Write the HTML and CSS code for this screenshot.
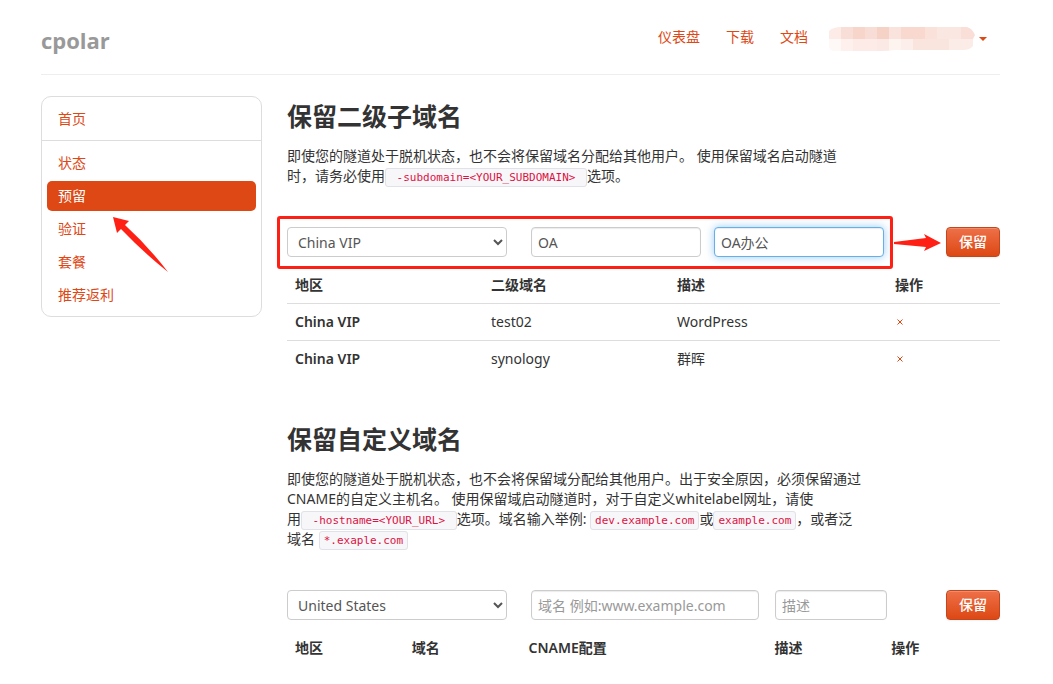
FILE: index.html
```html
<!DOCTYPE html>
<html lang="zh-CN">
<head>
<meta charset="utf-8">
<meta name="viewport" content="width=device-width, initial-scale=1">
<title>cpolar</title>
<link rel="stylesheet" href="styles.css">
</head>
<body>
<header class="site-header">
  <a class="brand" href="#">cpolar</a>
  <nav class="top-nav">
    <a href="#">仪表盘</a>
    <a href="#">下载</a>
    <a href="#">文档</a>
    <button class="account" type="button" aria-label="账户">
      <svg class="account-mask" width="146" height="24" viewBox="0 0 146 24" aria-hidden="true">
        <defs><clipPath id="mask"><path d="M0 4Q4 0 12 0H138Q143 1 146 8L144 12V19Q141 23 134 23H66Q60 24 52 24H6Q1 24 0 20Z"/></clipPath></defs>
        <g clip-path="url(#mask)" shape-rendering="crispEdges">
          <path fill="#fcebe7" d="M0 0h12v12H0z"/><path fill="#f9ded7" d="M12 0h12v12H12z"/><path fill="#f7d5cb" d="M24 0h12v12H24z"/><path fill="#f8ddd6" d="M36 0h12v12H36z"/><path fill="#f6d1c5" d="M48 0h12v12H48z"/><path fill="#fbe3dd" d="M60 0h12v12H60z"/><path fill="#f8d8cf" d="M72 0h24v12H72z"/><path fill="#fae1da" d="M96 0h12v12H96z"/><path fill="#fae7e2" d="M108 0h24v12H108z"/><path fill="#fadfd9" d="M132 0h14v12H132z"/>
          <path fill="#fef8f7" d="M0 12h12v12H0z"/><path fill="#fdf0ed" d="M12 12h12v12H12z"/><path fill="#fcebe7" d="M24 12h24v12H24z"/><path fill="#fbe9e5" d="M48 12h12v12H48z"/><path fill="#fdf4f0" d="M60 12h12v12H60z"/><path fill="#fceeea" d="M72 12h12v12H72z"/><path fill="#fae4de" d="M84 12h36v12H84z"/><path fill="#fcece8" d="M120 12h26v12H120z"/>
        </g>
      </svg>
      <span class="caret"></span>
    </button>
  </nav>
</header>

<div class="layout">
  <aside class="sidebar">
    <ul class="side-group">
      <li><a href="#">首页</a></li>
    </ul>
    <ul class="side-group">
      <li><a href="#">状态</a></li>
      <li><a class="active" href="#">预留</a></li>
      <li><a href="#">验证</a></li>
      <li><a href="#">套餐</a></li>
      <li><a href="#">推荐返利</a></li>
    </ul>
    <svg class="side-arrow" width="58" height="58" viewBox="0 0 58 58" aria-hidden="true"><path fill="#ff2015" d="M1 1L17 5L13 9Q36 30 56 56Q32 37 9 13L5 17Z"/></svg>
  </aside>

  <main class="content">
    <section class="panel">
      <h2>保留二级子域名</h2>
      <p class="intro">即使您的隧道处于脱机状态，也不会将保留域名分配给其他用户。 使用保留域名启动隧道时，请务必使用<code>&nbsp;-subdomain=&lt;YOUR_SUBDOMAIN&gt;&nbsp;</code>选项。</p>
      <form class="form-row">
        <div class="fields fields-sub">
          <select class="region" aria-label="地区"><option>China VIP</option></select>
          <input class="sub-name" type="text" value="OA" aria-label="二级域名">
          <input class="sub-note focused" type="text" value="OA办公" aria-label="描述">
          <svg class="row-arrow" width="48" height="18" viewBox="0 0 48 18" aria-hidden="true"><path fill="#ff2015" d="M0 8L32 4L30 0L47 9L30 17L32 13L0 10Z"/></svg>
        </div>
        <button class="btn" type="button">保留</button>
      </form>
      <table class="list list-sub">
        <thead><tr><th>地区</th><th>二级域名</th><th>描述</th><th>操作</th></tr></thead>
        <tbody>
          <tr><th scope="row">China VIP</th><td>test02</td><td>WordPress</td><td><a class="remove" href="#" aria-label="删除"><svg width="6" height="6" viewBox="0 0 6 6"><path d="M0.5 0.5L5.5 5.5M5.5 0.5L0.5 5.5"/></svg></a></td></tr>
          <tr><th scope="row">China VIP</th><td>synology</td><td>群晖</td><td><a class="remove" href="#" aria-label="删除"><svg width="6" height="6" viewBox="0 0 6 6"><path d="M0.5 0.5L5.5 5.5M5.5 0.5L0.5 5.5"/></svg></a></td></tr>
        </tbody>
      </table>
    </section>

    <section class="panel">
      <h2>保留自定义域名</h2>
      <p class="intro">即使您的隧道处于脱机状态，也不会将保留域分配给其他用户。出于安全原因，必须保留通过CNAME的自定义主机名。 使用保留域启动隧道时，对于自定义whitelabel网址，请使用<code>&nbsp;-hostname=&lt;YOUR_URL&gt;&nbsp;</code>选项。域名输入举例: <code>dev.example.com</code>或<code>example.com</code>，或者泛域名 <code>*.exaple.com</code></p>
      <form class="form-row">
        <div class="fields fields-custom">
          <select class="region" aria-label="地区"><option>United States</option></select>
          <input class="domain" type="text" placeholder="域名 例如:www.example.com" aria-label="域名">
          <input class="domain-note" type="text" placeholder="描述" aria-label="描述">
        </div>
        <button class="btn" type="button">保留</button>
      </form>
      <table class="list list-custom">
        <thead><tr><th>地区</th><th>域名</th><th>CNAME配置</th><th>描述</th><th>操作</th></tr></thead>
      </table>
    </section>
  </main>
</div>
</body>
</html>
```
FILE: styles.css
```css
* { box-sizing: border-box; }

body {
  margin: 0;
  padding: 0 53px 0 41px;
  background: #fff;
  color: #333;
  font: 14px/20px "Noto Sans", "Noto Sans CJK SC", sans-serif;
}

a { color: #dd4814; text-decoration: none; }

/* Header */
.site-header {
  display: flex;
  justify-content: space-between;
  align-items: center;
  height: 75px;
  border-bottom: 1px solid #eee;
}
.brand {
  margin-top: 6px;
  color: #999;
  font: 700 22px/36px "Open Sans", "Noto Sans", sans-serif;
}
.top-nav { display: flex; align-items: center; gap: 26px; }
.account {
  display: flex;
  align-items: center;
  gap: 4px;
  margin: 3px 13px 0 -5px;
  padding: 0;
  border: 0;
  background: none;
}
.caret { border: 4px solid transparent; border-top-color: #dd4814; border-bottom: 0; }

/* Layout */
.layout { display: flex; align-items: flex-start; gap: 25px; padding-top: 21px; }
.sidebar {
  position: relative;
  flex: 0 0 221px;
  border: 1px solid #ddd;
  border-radius: 10px;
}
.side-group { margin: 0; padding: 7px 5px 6px; list-style: none; }
.side-group + .side-group { border-top: 1px solid #ddd; }
.side-group li + li { margin-top: 3px; }
.side-group a { display: block; padding: 5px 11px; border-radius: 5px; }
.side-group a.active { background: #dd4814; color: #fff; }
.side-arrow { position: absolute; left: 70px; top: 119px; }

.content { flex: 1; min-width: 0; }
.panel { margin-bottom: 42px; }
h2 { margin: 0 0 10px; font-size: 25px; line-height: 40px; font-weight: 700; }
.intro { max-width: 576px; margin: 0 0 41px; }
code {
  padding: 2px 4px;
  border: 1px solid #e1e1e8;
  border-radius: 3px;
  background: #f7f7f9;
  color: #dd1144;
  font: 11px/14px "DejaVu Sans Mono", monospace;
  white-space: nowrap;
}

/* Forms */
.form-row { display: flex; margin-bottom: 10px; }
.fields { position: relative; display: flex; flex: 1; min-width: 0; }
.fields-sub { margin-right: 62px; }
.fields-custom { margin-right: 59px; }
select, input {
  min-width: 0;
  height: 30px;
  padding: 4px 6px;
  border: 1px solid #ccc;
  border-radius: 4px;
  background: #fff;
  color: #555;
  font: inherit;
}
input { box-shadow: inset 0 1px 1px rgba(0, 0, 0, 0.08); }
input::placeholder { color: #999; opacity: 1; }
.region { flex: 1 1 220px; margin-right: 24px; }
.sub-name { flex: 1 1 170px; margin-right: 13px; }
.sub-note { flex: 1 1 170px; }
.domain { flex: 1 1 228px; margin-right: 16px; }
.domain-note { flex: 1 1 112px; }
.focused {
  border-color: #66afe9;
  box-shadow: inset 0 1px 1px rgba(0, 0, 0, 0.08), 0 0 8px rgba(82, 168, 236, 0.6);
}
.fields-sub::after {
  content: "";
  position: absolute;
  inset: -11px -9px -12px -10px;
  border: 3px solid #ff2015;
  border-radius: 3px;
  pointer-events: none;
}
.row-arrow { position: absolute; left: 100%; top: 7px; margin-left: 10px; }
.btn {
  padding: 4px 12px;
  border: 1px solid #c2471d;
  border-radius: 4px;
  background: linear-gradient(#ee7048, #dd4814);
  box-shadow: inset 0 1px 0 rgba(255, 255, 255, 0.2), 0 1px 2px rgba(0, 0, 0, 0.05);
  color: #fff;
  font: inherit;
  font-weight: 500;
}

/* Tables */
.list { width: 100%; table-layout: fixed; border-collapse: collapse; }
.list th, .list td { padding: 8px; text-align: left; font-weight: 400; }
.list th { font-weight: 600; }
.list tbody th, .list tbody td { border-top: 1px solid #ddd; }
.list-sub th:nth-child(1) { width: 196px; }
.list-sub th:nth-child(2) { width: 186px; }
.list-sub th:nth-child(3) { width: 218px; }
.list-custom th:nth-child(3) { width: 246px; }
.remove { display: block; padding-left: 2px; }
.remove svg { display: block; stroke: #dd4814; stroke-width: 1; }
```
